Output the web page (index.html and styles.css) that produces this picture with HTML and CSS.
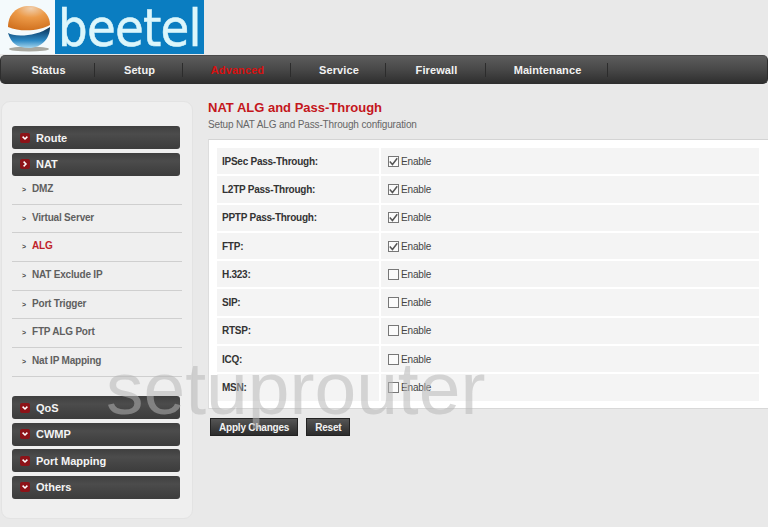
FILE: index.html
```html
<!DOCTYPE html>
<html lang="en">
<head>
    <meta charset="UTF-8">
    <meta name="viewport" content="width=device-width, initial-scale=1.0">
    <title>NAT ALG and Pass-Through</title>
    <link rel="stylesheet" href="styles.css">
</head>
<body>

<svg class="iconDefs" width="0" height="0">
    <defs>
        <symbol id="chevDown" viewBox="0 0 10 10"><path d="M2.6 3.6 5 6 7.4 3.6" fill="none" stroke="#fff" stroke-width="1.5"/></symbol>
        <symbol id="chevRight" viewBox="0 0 10 10"><path d="M3.6 2.6 6 5 3.6 7.4" fill="none" stroke="#fff" stroke-width="1.5"/></symbol>
        <symbol id="tick" viewBox="0 0 6 6"><path d="M.5 3 2.3 5 5.5 .8" fill="none" stroke="#555" stroke-width="1"/></symbol>
    </defs>
</svg>

<header class="logo">
    <div class="logoMark">
        <svg width="55" height="54" viewBox="0 0 55 54">
            <defs>
                <radialGradient id="orange" cx="0.55" cy="0.1" r="0.95">
                    <stop offset="0" stop-color="#f0cfae"/>
                    <stop offset="0.4" stop-color="#ec9a48"/>
                    <stop offset="1" stop-color="#cf6e1c"/>
                </radialGradient>
                <linearGradient id="blue" x1="0" y1="0" x2="0" y2="1">
                    <stop offset="0" stop-color="#0f2f4c"/>
                    <stop offset="0.25" stop-color="#15507e"/>
                    <stop offset="0.65" stop-color="#2f8bc6"/>
                    <stop offset="1" stop-color="#a5d5ec"/>
                </linearGradient>
            </defs>
            <ellipse cx="29" cy="49" rx="20" ry="2.5" fill="#a8a8a0"/>
            <path d="M8 33C14 37 36 37 50 27 50 39 41 48 29 48S11 43 8 33Z" fill="url(#blue)"/>
            <path d="M8 27C8 14 17 6 29 6S50 14 50 25C42 30 22 33 8 27Z" fill="url(#orange)"/>
        </svg>
    </div>
    <div class="logoWord">beetel</div>
</header>

<nav class="topNav">
    <a class="topLink">Status</a>
    <a class="topLink">Setup</a>
    <a class="topLink active">Advanced</a>
    <a class="topLink">Service</a>
    <a class="topLink">Firewall</a>
    <a class="topLink">Maintenance</a>
</nav>

<div class="pageBody">
    <aside class="sidebar">
        <div class="sideBar"><svg class="chev"><use href="#chevDown"/></svg>Route</div>
        <div class="sideBar"><svg class="chev"><use href="#chevRight"/></svg>NAT</div>
        <ul class="subMenu">
            <li>DMZ</li>
            <li>Virtual Server</li>
            <li class="current">ALG</li>
            <li>NAT Exclude IP</li>
            <li>Port Trigger</li>
            <li>FTP ALG Port</li>
            <li>Nat IP Mapping</li>
        </ul>
        <div class="sideBar"><svg class="chev"><use href="#chevDown"/></svg>QoS</div>
        <div class="sideBar"><svg class="chev"><use href="#chevDown"/></svg>CWMP</div>
        <div class="sideBar"><svg class="chev"><use href="#chevDown"/></svg>Port Mapping</div>
        <div class="sideBar"><svg class="chev"><use href="#chevDown"/></svg>Others</div>
    </aside>

    <main class="content">
        <h1>NAT ALG and Pass-Through</h1>
        <p class="intro">Setup NAT ALG and Pass-Through configuration</p>

        <form class="panel">
            <div class="algGrid">
                <div class="label">IPSec Pass-Through:</div>
                <label class="value"><span class="box"><svg><use href="#tick"/></svg></span>Enable</label>
                <div class="label">L2TP Pass-Through:</div>
                <label class="value"><span class="box"><svg><use href="#tick"/></svg></span>Enable</label>
                <div class="label">PPTP Pass-Through:</div>
                <label class="value"><span class="box"><svg><use href="#tick"/></svg></span>Enable</label>
                <div class="label">FTP:</div>
                <label class="value"><span class="box"><svg><use href="#tick"/></svg></span>Enable</label>
                <div class="label">H.323:</div>
                <label class="value"><span class="box"></span>Enable</label>
                <div class="label">SIP:</div>
                <label class="value"><span class="box"></span>Enable</label>
                <div class="label">RTSP:</div>
                <label class="value"><span class="box"></span>Enable</label>
                <div class="label">ICQ:</div>
                <label class="value"><span class="box"></span>Enable</label>
                <div class="label">MSN:</div>
                <label class="value"><span class="box"></span>Enable</label>
            </div>
        </form>

        <div class="actions">
            <button type="button">Apply Changes</button>
            <button type="button">Reset</button>
        </div>
    </main>
</div>

<div class="watermark">setuprouter</div>

</body>
</html>
```

FILE: styles.css
```css
body {
    font-family: "Liberation Sans", Arial, sans-serif;
    margin: 0;
    padding: 0;
    height: 527px;
    overflow: hidden;
    position: relative;
    background-color: #e9e9e9;
    color: #333333;
}

.iconDefs {
    position: absolute;
}

.logo {
    display: flex;
    width: 204px;
    height: 54px;
}

.logoMark {
    width: 55px;
    height: 54px;
    background-color: #f4fafc;
}

.logoMark svg {
    display: block;
}

.logoWord {
    flex: 1;
    box-sizing: border-box;
    padding: 3px 0 0 3px;
    background-color: #0a7dc1;
    color: #dcf6fb;
    font-family: "DejaVu Sans", sans-serif;
    font-size: 52px;
    font-stretch: condensed;
    line-height: 51px;
    letter-spacing: -0.8px;
    -webkit-text-stroke: 0.5px #dcf6fb;
}

.topNav {
    display: grid;
    grid-template-columns: 94px 88px 108px 95px 100px 122px;
    height: 29px;
    margin-top: 1px;
    align-content: center;
    box-sizing: border-box;
    border-radius: 5px;
    background: linear-gradient(#5c5c5c, #484848 50%, #2f2f2f);
    border: 1px solid #2e2e2e;
    border-top-color: #4a4a4a;
}

.topLink {
    padding-left: 2px;
    height: 14px;
    line-height: 14px;
    font-size: 11px;
    font-weight: bold;
    letter-spacing: 0.1px;
    text-align: center;
    color: #f2f2f2;
    border-right: 1px solid #2c2c2c;
}

.topLink.active {
    color: #d81010;
}

.pageBody {
    display: flex;
    align-items: flex-start;
    margin-top: 17px;
    padding-left: 1px;
}

.sidebar {
    width: 192px;
    height: 418px;
    box-sizing: border-box;
    padding: 24px 12px 0 10px;
    background-color: #efefef;
    border: 1px solid #e3e3e3;
    border-radius: 9px;
}

.sideBar {
    display: flex;
    align-items: center;
    height: 23px;
    width: 168px;
    margin-bottom: 3.5px;
    border-radius: 3px;
    background: linear-gradient(#3f3f3f, #4c4c4c 35%, #444444 65%, #3c3c3c);
    color: #f4f4f4;
    font-size: 11px;
    font-weight: bold;
}

.chev {
    width: 10px;
    height: 10px;
    margin: 0 6px 0 8px;
    border-radius: 2px;
    background-color: #8d1318;
}

.subMenu {
    list-style: none;
    margin: -3px -2px 19.5px 0;
    padding: 0;
}

.subMenu li {
    height: 28.7px;
    box-sizing: border-box;
    padding: 6px 0 0 20px;
    border-bottom: 1px solid #cfcfcf;
    font-size: 10px;
    font-weight: bold;
    letter-spacing: -0.2px;
    line-height: 14px;
    color: #5f5f5f;
    position: relative;
}

.subMenu li::before {
    content: ">";
    position: absolute;
    left: 10px;
    top: 7px;
    font-size: 7px;
    letter-spacing: 0;
    color: #444444;
}

.subMenu li.current {
    color: #c01f2a;
}

.content {
    flex: 1;
    margin-left: 15px;
}

h1 {
    margin: 0;
    font-size: 13px;
    line-height: 14px;
    color: #c4161c;
}

.intro {
    margin: 3px 0 0;
    font-size: 10px;
    letter-spacing: -0.15px;
    line-height: 14px;
    color: #666666;
}

.panel {
    margin-top: 7px;
    height: 270px;
    box-sizing: border-box;
    padding: 8px 9px 0 8px;
    background-color: #ffffff;
    border-top: 1px solid #d4d4d4;
    border-left: 1px solid #dddddd;
    border-bottom: 1px solid #d8d8d8;
}

.algGrid {
    display: grid;
    grid-template-columns: 162px 1fr;
    grid-auto-rows: 26.3px;
    gap: 2px;
}

.label, .value {
    display: flex;
    align-items: center;
    background-color: #f4f4f4;
    font-size: 10px;
}

.label {
    padding-left: 5px;
    font-weight: bold;
    letter-spacing: -0.25px;
    color: #333333;
}

.value {
    padding-left: 7px;
    letter-spacing: -0.15px;
    color: #444444;
}

.box {
    width: 11px;
    height: 11px;
    margin-right: 2px;
    box-sizing: border-box;
    border: 1px solid #777777;
    background-color: #fbfbfb;
}

.box svg {
    display: block;
    width: 9px;
    height: 9px;
}

.actions {
    display: flex;
    gap: 8px;
    margin: 9px 0 0 2px;
}

button {
    height: 18px;
    padding: 0 8px;
    border: 1px solid #222222;
    background: linear-gradient(#555555, #2c2c2c);
    color: #f2f2f2;
    font-family: inherit;
    font-size: 10px;
    letter-spacing: -0.2px;
    font-weight: bold;
}

.watermark {
    position: absolute;
    left: 106px;
    top: 345px;
    font-size: 75px;
    line-height: 86px;
    color: rgba(181, 181, 181, 0.53);
    white-space: nowrap;
}
```
